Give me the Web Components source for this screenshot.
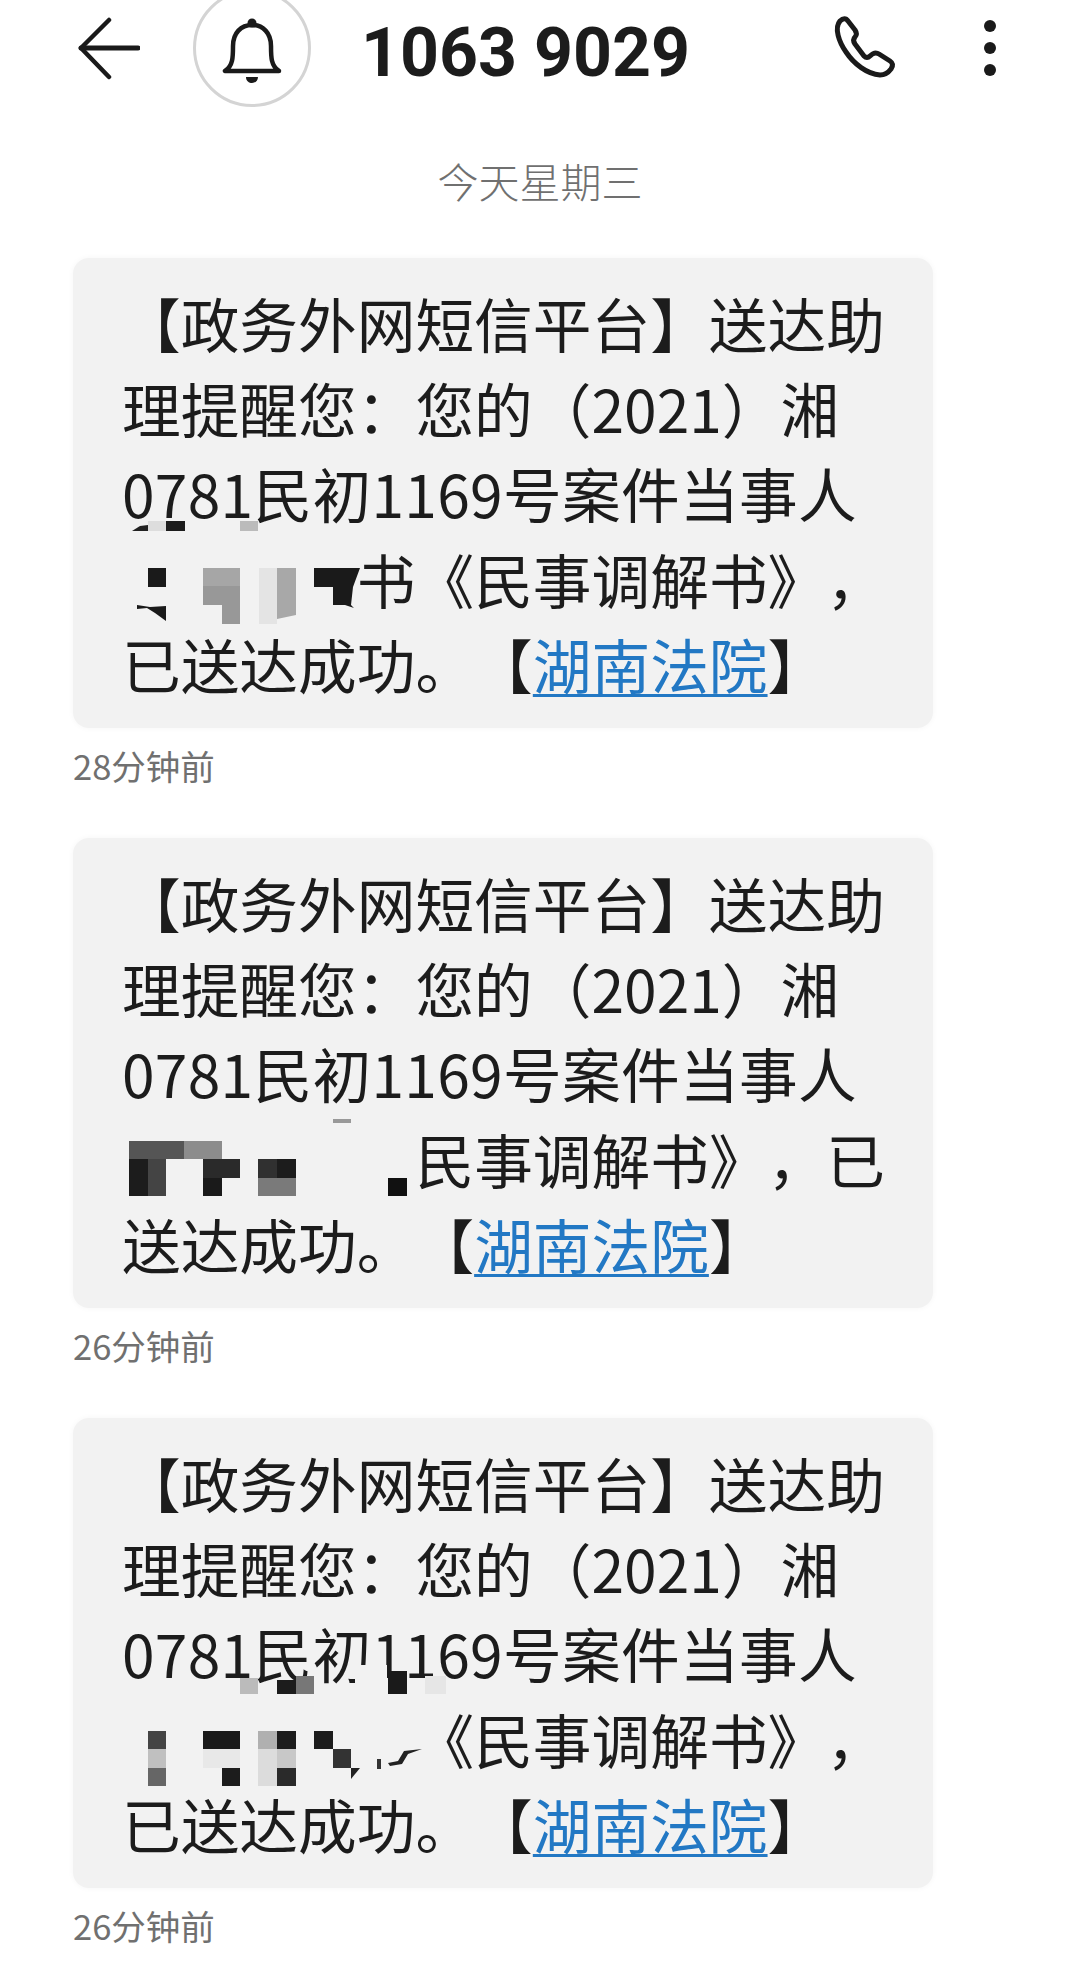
<!DOCTYPE html>
<html lang="zh-CN">
<head>
<meta charset="utf-8">
<title>1063 9029</title>
<style>
  html, body { margin: 0; padding: 0; background: #fff; }
  body { width: 1080px; height: 1984px; overflow: hidden; font-family: "Noto Sans CJK SC", "Noto Sans", sans-serif; }
</style>
</head>
<body>
<sms-page>
  <sms-header title-text="1063 9029"></sms-header>
  <sms-date>今天星期三</sms-date>

  <sms-message time="28分钟前">
    <sms-line>【政务外网短信平台】送达助</sms-line>
    <sms-line>理提醒您：您的（2021）湘</sms-line>
    <sms-line style="letter-spacing:.3px">0781民初1169号案件当事人</sms-line>
    <sms-line indent="4">书《民事调解书》，</sms-line>
    <sms-line>已送达成功。【<sms-link>湖南法院</sms-link>】</sms-line>
    <svg slot="mosaic" viewBox="73 257 860 470" width="860" height="470">
      <polygon fill="#222" points="132,530 140,525 148,524 148,530"/>
      <rect x="148" y="520" width="18" height="10" fill="#ddd"/>
      <rect x="166" y="520" width="19" height="10" fill="#1c1c1c"/>
      <rect x="240" y="520" width="18" height="10" fill="#bbb"/>
      <rect x="148" y="567" width="18" height="19" fill="#1a1a1a"/>
      <polygon fill="#1a1a1a" points="137,604 150,606 166,605 166,620 155,612 147,607 137,608"/>
      <polygon fill="#a6a6a6" points="203,567 240,567 240,585 203,585"/>
      <polygon fill="#989898" points="203,585 240,585 240,623 222,623 222,604 203,604"/>
      <rect x="259" y="567" width="18" height="56" fill="#e4e4e4"/>
      <polygon fill="#a8a8a8" points="277,567 296,567 296,614 277,618"/>
      <polygon fill="#1a1a1a" points="314,567 360,567 353,586 351,604 354,607 345,604 333,604 333,586 314,586"/>
    </svg>
  </sms-message>

  <sms-message time="26分钟前">
    <sms-line>【政务外网短信平台】送达助</sms-line>
    <sms-line>理提醒您：您的（2021）湘</sms-line>
    <sms-line style="letter-spacing:.3px">0781民初1169号案件当事人</sms-line>
    <sms-line indent="5">民事调解书》，已</sms-line>
    <sms-line>送达成功。【<sms-link>湖南法院</sms-link>】</sms-line>
    <svg slot="mosaic" viewBox="73 837 860 470" width="860" height="470">
      <rect x="333" y="1118" width="18" height="4" fill="#999"/>
      <rect x="129" y="1140" width="55" height="18" fill="#555"/>
      <rect x="184" y="1140" width="38" height="18" fill="#8c8c8c"/>
      <rect x="129" y="1158" width="19" height="37" fill="#1c1c1c"/>
      <rect x="148" y="1158" width="18" height="37" fill="#444"/>
      <rect x="203" y="1158" width="37" height="19" fill="#2a2a2a"/>
      <rect x="203" y="1177" width="19" height="18" fill="#1a1a1a"/>
      <rect x="258" y="1158" width="19" height="19" fill="#303030"/>
      <rect x="277" y="1158" width="19" height="19" fill="#1c1c1c"/>
      <rect x="258" y="1177" width="38" height="18" fill="#7a7a7a"/>
      <rect x="388" y="1177" width="19" height="18" fill="#111"/>
    </svg>
  </sms-message>

  <sms-message time="26分钟前">
    <sms-line>【政务外网短信平台】送达助</sms-line>
    <sms-line>理提醒您：您的（2021）湘</sms-line>
    <sms-line style="letter-spacing:.3px">0781民初1169号案件当事人</sms-line>
    <sms-line indent="5">《民事调解书》，</sms-line>
    <sms-line>已送达成功。【<sms-link>湖南法院</sms-link>】</sms-line>
    <svg slot="mosaic" viewBox="73 1417 860 470" width="860" height="470">
      <rect x="240" y="1677" width="18" height="16" fill="#bbb"/>
      <rect x="277" y="1679" width="19" height="14" fill="#1c1c1c"/>
      <rect x="296" y="1675" width="18" height="18" fill="#777"/>
      <rect x="355" y="1664" width="32" height="30" fill="#f2f2f2"/>
      <rect x="388" y="1670" width="19" height="23" fill="#1a1a1a"/>
      <rect x="425" y="1675" width="21" height="18" fill="#e6e6e6"/>
      <rect x="148" y="1730" width="18" height="18" fill="#444"/>
      <rect x="148" y="1748" width="18" height="19" fill="#c0c0c0"/>
      <rect x="148" y="1767" width="18" height="18" fill="#666"/>
      <rect x="203" y="1730" width="37" height="18" fill="#1a1a1a"/>
      <rect x="203" y="1748" width="37" height="19" fill="#e8e8e8"/>
      <rect x="222" y="1767" width="18" height="18" fill="#1c1c1c"/>
      <rect x="258" y="1730" width="19" height="18" fill="#b0b0b0"/>
      <rect x="258" y="1748" width="19" height="37" fill="#dcdcdc"/>
      <rect x="277" y="1730" width="19" height="18" fill="#1c1c1c"/>
      <rect x="277" y="1748" width="19" height="19" fill="#c8c8c8"/>
      <rect x="277" y="1767" width="19" height="18" fill="#2a2a2a"/>
      <rect x="314" y="1730" width="19" height="18" fill="#1c1c1c"/>
      <rect x="333" y="1748" width="18" height="19" fill="#333"/>
      <polygon fill="#222" points="351,1767 360,1767 351,1778"/>
      <rect x="377" y="1758" width="4" height="10" fill="#333"/>
      <polygon fill="#222" points="388,1762 398,1760 404,1750 422,1748 408,1753 402,1763 390,1765"/>
    </svg>
  </sms-message>
  <sms-footer></sms-footer>
</sms-page>

<script>
function define(name, css, html) {
  customElements.define(name, class extends HTMLElement {
    constructor() {
      super();
      this.attachShadow({ mode: 'open' }).innerHTML = '<style>' + css + '</style>' + (typeof html === 'function' ? html(this) : html);
    }
  });
}

define('sms-page',
  ':host{display:flex;flex-direction:column;width:1080px;height:1984px;overflow:hidden;background:#fff;color:#1c1c1c;font-family:"Noto Sans CJK SC","Noto Sans",sans-serif}',
  '<slot></slot>');

define('sms-header',
  `:host{display:flex;align-items:center;height:96px;flex:none;padding-left:78px;color:#1a1a1a}
   .back{width:62px;height:64px;flex:none}
   .bell{width:118px;height:118px;box-sizing:border-box;border:3px solid #d4d4d4;border-radius:50%;flex:none;margin-left:53px;display:flex;align-items:center;justify-content:center;background:#fff}
   .bell svg{width:62px;height:70px}
   h1{margin:10px 0 0 50px;font:700 68px/86px Roboto,"Liberation Sans",sans-serif;width:472px;flex:none;white-space:nowrap;color:#1c1c1c}
   .call{width:68px;height:66px;flex:none}
   .more{width:14px;height:60px;flex:none;margin-left:82px}`,
  () => `
  <svg class="back" viewBox="0 0 62 64" fill="none" stroke="#1a1a1a" stroke-linecap="round" stroke-linejoin="round" stroke-width="4.5">
    <path d="M31 4 3 32 31 61"/><path d="M3 32H60" stroke-width="5"/>
  </svg>
  <div class="bell">
    <svg viewBox="0 -4 62 70" fill="none">
      <circle cx="31" cy="6" r="4.5" fill="#1a1a1a"/>
      <path d="M4 54H58C50 49 50 40 50 29 50 16 42 8 31 8 20 8 12 16 12 29 12 40 12 49 4 54Z" stroke="#1a1a1a" stroke-width="4.5" stroke-linejoin="round"/>
      <path d="M25 60H37C37 64 34 66 31 66 28 66 25 64 25 60Z" fill="#1a1a1a"/>
    </svg>
  </div>
  <h1>1063 9029</h1>
  <svg class="call" viewBox="0 0 68 66" fill="none" stroke="#1a1a1a" stroke-width="5" stroke-linejoin="round" stroke-linecap="round">
    <path d="M7 6C10 3 13 3 15 6L22 15C24 18 24 20 22 22 20 24 20 26 22 29L31 41C33 43 35 43 37 41 40 38 43 37 46 39L57 46C60 48 60 51 58 54 55 58 51 60 47 60 34 59 21 49 13 37 6 27 1 13 7 6Z"/>
  </svg>
  <svg class="more" viewBox="0 0 14 60" fill="#1a1a1a">
    <circle cx="7" cy="8" r="6"/><circle cx="7" cy="30" r="6"/><circle cx="7" cy="52" r="6"/>
  </svg>`);

define('sms-date',
  ':host{display:block;text-align:center;font-size:41px;line-height:58px;color:#707070;margin-top:55px;margin-bottom:49px;font-weight:300;text-spacing-trim:space-all}',
  '<slot></slot>');

define('sms-message',
  `:host{display:block;margin-left:73px;width:860px;margin-bottom:49px}
   .bubble{position:relative;box-sizing:border-box;height:470px;background:#f2f2f2;border-radius:16px;padding:22px 0 0 49px;box-shadow:0 0 6px #f6f6f6}
   .mask{position:absolute;left:0;top:0;width:860px;height:470px;pointer-events:none;display:block}
   .time{font-size:34.5px;line-height:48px;margin-top:13px;color:#707070;font-weight:400}`,
  el => `<div class="bubble"><slot></slot><div class="mask"><slot name="mosaic"></slot></div></div>
         <div class="time">${el.getAttribute('time')}</div>`);

define('sms-line',
  `:host{display:block;height:85.2px;font-size:58.7px;line-height:85.2px;white-space:nowrap;color:#1c1c1c;text-spacing-trim:space-all}
   .gap{display:inline-block}`,
  el => `<span class="gap" style="width:${(+el.getAttribute('indent') || 0) * 58.7}px"></span><slot></slot>`);

define('sms-link',
  ':host{display:inline;color:#2278c4;text-decoration:underline;text-decoration-thickness:3px;text-underline-offset:5px}',
  '<slot></slot>');

define('sms-footer',
  ':host{display:block;flex:1;background:linear-gradient(#fff,#f9f9f9)}',
  '');
</script>
</body>
</html>
